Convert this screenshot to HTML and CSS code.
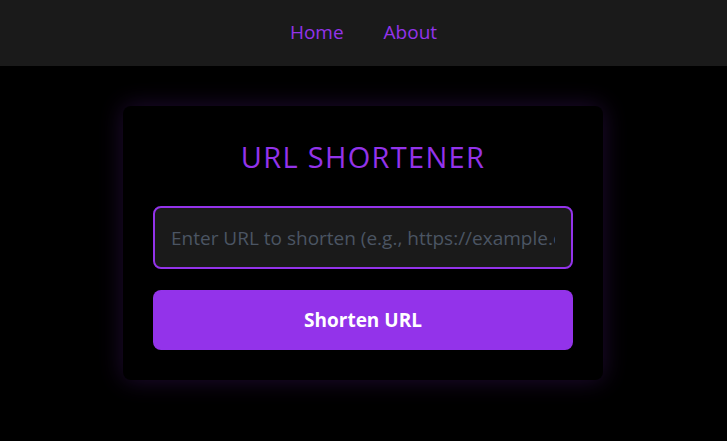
FILE: index.html
```html
<!DOCTYPE html>
<html lang="en">
<head>
<meta charset="utf-8">
<title>URL Shortener</title>
<link rel="stylesheet" href="styles.css">
</head>
<body>
<nav class="nav">
  <a class="nav-link" href="#">Home</a>
  <a class="nav-link" href="#">About</a>
</nav>
<main class="main">
  <section class="card">
    <h1 class="title">URL SHORTENER</h1>
    <input class="url-input" type="text" placeholder="Enter URL to shorten (e.g., https://example.com)">
    <button class="btn" type="button">Shorten URL</button>
  </section>
</main>
</body>
</html>
```
FILE: styles.css
```css
* { box-sizing: border-box; }
html, body { margin: 0; padding: 0; }
body {
  background: #000;
  font-family: "Open Sans", "Noto Sans", sans-serif;
  color: #fff;
  min-height: 100vh;
}
.nav {
  height: 66px;
  background: #1a1a1a;
  display: flex;
  justify-content: center;
  align-items: center;
  gap: 40px;
  padding-bottom: 2px;
}
.nav-link {
  color: #9333ea;
  text-decoration: none;
  font-size: 19px;
}
.main {
  padding-top: 40px;
  display: flex;
  justify-content: center;
  padding-right: 1px;
}
.card {
  width: 480px;
  background: #000;
  border-radius: 8px;
  padding: 30px;
  display: flex;
  flex-direction: column;
  box-shadow: 0 0 24px rgba(147, 51, 234, 0.22);
}
.title {
  margin: 0 0 29px;
  text-align: center;
  color: #9333ea;
  font-weight: 400;
  font-size: 29px;
  line-height: 41px;
  letter-spacing: 1.3px;
}
.url-input {
  width: 100%;
  height: 63px;
  background: #1a1a1a;
  border: 2px solid #9333ea;
  border-radius: 8px;
  padding: 0 16px;
  font-family: inherit;
  font-size: 19px;
  color: #fff;
  outline: none;
}
.url-input::placeholder { color: #4b5563; }
.btn {
  margin-top: 21px;
  height: 60px;
  width: 100%;
  background: #9333ea;
  border: none;
  border-radius: 8px;
  color: #fff;
  font-family: inherit;
  font-weight: 700;
  font-size: 19px;
  cursor: pointer;
}
```
